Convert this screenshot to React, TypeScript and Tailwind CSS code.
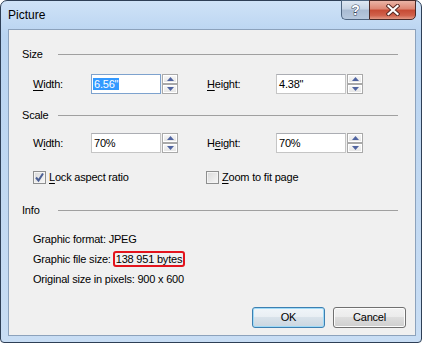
import React from "react";

const F = "font-['Liberation_Sans',Arial,sans-serif]";

function Spin() {
  const btn =
    "h-[10px] w-[16px] border border-[#a9a9a9] bg-[linear-gradient(#f8f8f8,#e4e4e4)] shadow-[inset_0_0_0_1px_#ffffff] flex items-center justify-center";
  return (
    <div className="flex flex-col gap-0 ml-[1px]">
      <div className={btn}>
        <svg width="7" height="4" viewBox="0 0 7 4">
          <path d="M3.5 0 L7 4 L0 4Z" fill="#5064a0" />
        </svg>
      </div>
      <div className={btn}>
        <svg width="7" height="4" viewBox="0 0 7 4">
          <path d="M0 0 L7 0 L3.5 4Z" fill="#5064a0" />
        </svg>
      </div>
    </div>
  );
}

function Input({ children, focused }: { children: React.ReactNode; focused?: boolean }) {
  return (
    <div
      className={
        "w-[70px] h-[20px] bg-white flex items-center pl-[1px] border " +
        (focused ? "border-[#7da2ce]" : "border-[#c5c5c5] border-t-[#abadb3]")
      }
    >
      {children}
    </div>
  );
}

function Label({ pre, u, post }: { pre: string; u: string; post: string }) {
  return (
    <span>
      {pre}
      <span className="underline underline-offset-[2px]">{u}</span>
      {post}
    </span>
  );
}

function Header({ text }: { text: string }) {
  return (
    <div className="flex items-center h-[16px] pr-[9px]">
      <span className="w-[36px]">{text}</span>
      <div className="flex-1 h-px bg-[#a0a0a0]" />
    </div>
  );
}

function Checkbox({ checked }: { checked?: boolean }) {
  return (
    <div className="w-[13px] h-[13px] border border-[#8e8f8f] bg-[linear-gradient(135deg,#d9d9d9,#f7f7f7)] shadow-[inset_0_0_0_1px_#f4f4f4] flex items-center justify-center">
      {checked && (
        <svg width="11" height="11" viewBox="0 0 11 11">
          <path d="M2 5.5 L4.5 8.5 L9 1.5" stroke="#4b5f94" strokeWidth="2" fill="none" />
        </svg>
      )}
    </div>
  );
}

function WinButton({ children, def }: { children: React.ReactNode; def?: boolean }) {
  return (
    <div
      className={
        "w-[73px] h-[21px] rounded-[3px] border flex items-center justify-center " +
        (def
          ? "border-[#3c7fb1] bg-[linear-gradient(#f0f5f9,#e8eef3_50%,#d8e2ea_50%,#cad6e0)] shadow-[inset_0_0_0_1px_#9fdaf7]"
          : "border-[#707070] bg-[linear-gradient(#f2f2f2,#ebebeb_50%,#dddddd_50%,#cfcfcf)] shadow-[inset_0_0_0_1px_#fcfcfc]")
      }
    >
      {children}
    </div>
  );
}

export default function App() {
  return (
    <div className={"w-[423px] h-[344px] bg-white " + F}>
      <div className="w-[422px] h-[343px] rounded-t-[7px] rounded-b-[4px] border border-[#2e3f56] bg-[linear-gradient(180deg,#cfe2f7_0%,#b9d4f1_10%,#c2d9f2_60%,#c8ddf4_100%)] flex flex-col">
        {/* title bar */}
        <div className="h-[28px] flex items-start">
          <div className="h-[28px] flex items-center pl-[7px] text-[12px] text-black">Picture</div>
          <div className="flex-1" />
          <div className="flex mr-[5px] -mt-px">
            <div className="w-[28px] h-[20px] border border-[#4e6580] border-r-0 rounded-bl-[5px] bg-[linear-gradient(#dfe8f3,#c6d4e5_45%,#a9bbd2_50%,#b6c8de)] flex items-center justify-center">
              <span className="text-white font-bold text-[14px] leading-none [-webkit-text-stroke:1px_#3a4a60] [paint-order:stroke_fill]">
                ?
              </span>
            </div>
            <div className="w-[47px] h-[20px] border border-[#4a2a28] rounded-br-[5px] bg-[linear-gradient(#eab4a6,#dd8572_45%,#c64a33_50%,#d0614b_80%,#e39a86)] flex items-center justify-center">
              <svg width="14" height="12" viewBox="0 0 14 12">
                <path d="M2.5 2 L11.5 10 M11.5 2 L2.5 10" stroke="#5a2a24" strokeWidth="4.2" strokeLinecap="square" />
                <path d="M2.5 2 L11.5 10 M11.5 2 L2.5 10" stroke="#ffffff" strokeWidth="2.2" strokeLinecap="square" />
              </svg>
            </div>
          </div>
        </div>
        {/* content */}
        <div className="ml-[7px] w-[408px] h-[307px] border border-[#8ca2bc] bg-[#f0f0f0] text-[11px] tracking-[-0.2px] text-black pl-[13px] pr-[8px]">
          <div className="mt-[16px]">
            <Header text="Size" />
          </div>
          <div className="mt-[12px] ml-[11px] flex items-center h-[20px]">
            <div className="w-[58px]">
              <Label pre="" u="W" post="idth:" />
            </div>
            <Input focused>
              <span className="bg-[#3399ff] text-white px-[1px] leading-[12px]">6.56"</span>
            </Input>
            <Spin />
            <div className="w-[29px]" />
            <div className="w-[69px]">
              <Label pre="" u="H" post="eight:" />
            </div>
            <Input>
              <span className="pl-[1px]">4.38"</span>
            </Input>
            <Spin />
          </div>
          <div className="mt-[13px]">
            <Header text="Scale" />
          </div>
          <div className="mt-[10px] ml-[11px] flex items-center h-[20px]">
            <div className="w-[58px]">
              <Label pre="W" u="i" post="dth:" />
            </div>
            <Input>
              <span className="pl-[1px]">70%</span>
            </Input>
            <Spin />
            <div className="w-[29px]" />
            <div className="w-[69px]">
              <Label pre="H" u="e" post="ight:" />
            </div>
            <Input>
              <span className="pl-[1px]">70%</span>
            </Input>
            <Spin />
          </div>
          <div className="mt-[18px] ml-[11px] flex items-center h-[13px]">
            <Checkbox checked />
            <div className="ml-[3px] w-[157px]">
              <Label pre="" u="L" post="ock aspect ratio" />
            </div>
            <Checkbox />
            <div className="ml-[3px]">
              <Label pre="" u="Z" post="oom to fit page" />
            </div>
          </div>
          <div className="mt-[18px]">
            <Header text="Info" />
          </div>
          <div className="mt-[11px] ml-[11px] flex flex-col">
            <div className="h-[20px] flex items-center">Graphic format: JPEG</div>
            <div className="h-[20px] flex items-center">
              Graphic file size:
              <span className="ml-[2px] border-2 border-[#e3141c] rounded-[3px] px-[1px] leading-[10px] py-[1px]">
                138 951 bytes
              </span>
            </div>
            <div className="h-[20px] flex items-center">Original size in pixels: 900 x 600</div>
          </div>
          <div className="mt-[18px] flex justify-end gap-[8px] pr-[1px]">
            <WinButton def>OK</WinButton>
            <WinButton>Cancel</WinButton>
          </div>
        </div>
      </div>
    </div>
  );
}
